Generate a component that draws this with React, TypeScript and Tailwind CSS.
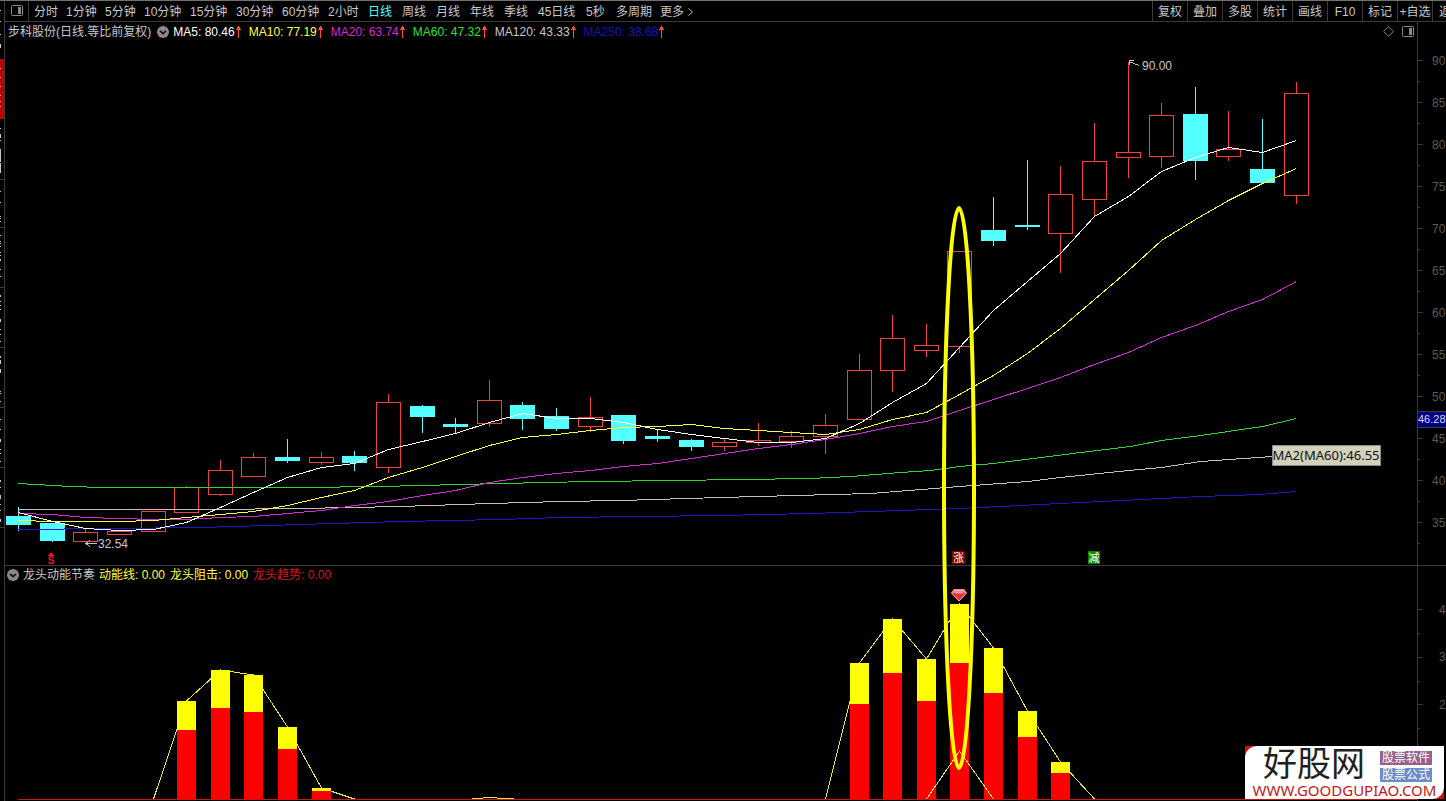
import React from "react";

type Candle = [x: number, wickTop: number, top: number, bottom: number, wickBottom: number, down?: 1];

const candles: Candle[] = [
  [18, 507, 516, 525, 531, 1],
  [52, 523, 523, 541, 542, 1],
  [85, 528, 532, 541, 541],
  [119, 531, 531, 534, 535],
  [153, 511, 511, 531, 531],
  [186, 486, 487, 512, 512],
  [220, 460, 470, 494, 496],
  [253, 453, 457, 476, 476],
  [287, 439, 457, 461, 463, 1],
  [321, 452, 457, 462, 465],
  [354, 451, 456, 463, 471, 1],
  [388, 394, 402, 467, 473],
  [422, 405, 406, 417, 433, 1],
  [455, 418, 424, 427, 434, 1],
  [489, 380, 400, 423, 427],
  [522, 402, 405, 419, 430, 1],
  [556, 408, 416, 429, 431, 1],
  [590, 397, 417, 426, 432],
  [623, 415, 415, 441, 444, 1],
  [657, 430, 436, 439, 442, 1],
  [691, 439, 440, 447, 451, 1],
  [724, 439, 442, 446, 451],
  [758, 423, 440, 442, 446],
  [791, 431, 436, 441, 448],
  [825, 414, 425, 436, 454],
  [859, 354, 370, 419, 419],
  [892, 315, 338, 370, 392],
  [926, 324, 345, 350, 357],
  [959, 251, 251, 346, 353],
  [993, 197, 230, 241, 246, 1],
  [1027, 160, 225, 227, 230, 1],
  [1060, 166, 194, 233, 273],
  [1094, 123, 161, 199, 217],
  [1128, 62, 152, 157, 178],
  [1161, 103, 115, 156, 168],
  [1195, 87, 114, 161, 180, 1],
  [1228, 111, 149, 156, 161],
  [1262, 119, 169, 183, 183, 1],
  [1296, 82, 93, 195, 204],
];

const averages = [
  {
    color: "#1818c8",
    points: "18,529 200,527 300,524 400,521 500,519 560,517 640,516 720,515 810,513 900,510 959,508 1060,503 1161,498 1200,496 1260,494 1296,491",
  },
  {
    color: "#c0c0c0",
    points: "18,509 210,509 300,508 400,506 490,503 560,501 620,500 720,497 870,493 959,486 1027,481 1060,477 1128,470 1161,467 1200,461 1272,456 1296,453",
  },
  {
    color: "#2fd62f",
    points: "18,483 70,486 103,487 300,487 380,486 500,483 590,481 674,480 740,479 810,478 850,476 900,472 930,470 959,466 993,463 1080,452 1130,446 1161,440 1200,435 1262,426 1296,418",
  },
  {
    color: "#d62ad6",
    points: "18,513 52,514 85,517 119,518 153,519 186,519 220,517 253,516 287,513 321,510 354,505 388,501 422,495 455,490 489,482 522,477 556,473 590,470 623,466 657,463 691,458 724,453 758,448 791,444 825,439 859,433 892,426 926,421 959,410 993,399 1027,388 1060,377 1094,364 1128,352 1161,337 1195,325 1228,311 1262,299 1296,281",
  },
  {
    color: "#ffff40",
    points: "18,520 52,521 85,521 119,521 153,520 186,517 220,514 253,511 287,505 321,497 354,490 388,477 422,467 455,456 489,445 522,437 556,434 590,430 623,427 657,426 691,424 724,428 758,430 791,432 825,434 859,429 892,419 926,412 959,394 993,375 1027,353 1060,328 1094,299 1128,270 1161,240 1195,219 1228,200 1262,183 1296,168",
  },
  {
    color: "#ffffff",
    points: "18,512 52,521 85,528 119,530 153,529 186,522 220,507 253,492 287,477 321,467 354,463 388,449 422,441 455,433 489,422 522,413 556,418 590,418 623,422 657,429 691,434 724,438 758,442 791,442 825,438 859,423 892,402 926,383 959,347 993,310 1027,281 1060,253 1094,216 1128,196 1161,171 1195,157 1228,147 1262,152 1296,140",
  },
];

const bars: [x: number, top: number, split: number][] = [
  [177, 701, 730],
  [211, 670, 708],
  [244, 675, 712],
  [278, 727, 749],
  [312, 788, 791],
  [850, 663, 704],
  [883, 619, 673],
  [917, 659, 701],
  [950, 604, 663],
  [984, 648, 693],
  [1018, 711, 737],
  [1051, 762, 773],
];

const prices = [90, 85, 80, 75, 70, 65, 60, 55, 50, 45, 40, 35];

const minutePeriods = [
  { label: "分时", width: "w-6" },
  { label: "1分钟", width: "w-[31px]" },
  { label: "5分钟", width: "w-[31px]" },
  { label: "10分钟", width: "w-[38px]" },
  { label: "15分钟", width: "w-[38px]" },
  { label: "30分钟", width: "w-[38px]" },
  { label: "60分钟", width: "w-[38px]" },
  { label: "2小时", width: "w-[31px]" },
];
const dayPeriods = [
  { label: "日线", width: "w-6", active: true },
  { label: "周线", width: "w-6" },
  { label: "月线", width: "w-6" },
  { label: "年线", width: "w-6" },
  { label: "季线", width: "w-6" },
  { label: "45日线", width: "w-[38px]" },
  { label: "5秒", width: "w-5" },
  { label: "多周期", width: "w-9" },
];
const tools = ["复权", "叠加", "多股", "统计", "画线", "F10", "标记", "+自选"];

const legend = [
  { text: "MA5: 80.46", cls: "text-white" },
  { text: "MA10: 77.19", cls: "text-[#ffff40]" },
  { text: "MA20: 63.74", cls: "text-[#d62ad6]" },
  { text: "MA60: 47.32", cls: "text-[#2fe02f]" },
  { text: "MA120: 43.33", cls: "text-[#c8c8c8]" },
  { text: "MA250: 38.68", cls: "text-[#1414c0]" },
];

const stripMarks: [y: number, h: number][] = [
  [10, 1], [21, 1], [34, 1], [44, 4], [68, 1], [77, 1], [86, 1], [95, 1], [101, 1], [106, 1], [128, 1], [134, 4], [140, 1],
  [149, 13], [163, 10], [191, 1], [202, 1], [216, 1], [218, 1], [221, 1], [235, 1], [241, 1], [243, 1], [246, 1], [252, 1],
  [255, 1], [259, 2], [269, 1], [276, 1], [295, 2], [301, 1], [305, 1], [309, 1], [319, 3], [329, 1], [334, 1], [341, 1],
  [356, 2], [360, 4], [369, 4], [391, 1], [393, 1], [401, 1], [419, 1], [429, 1], [439, 3], [449, 1], [453, 1], [461, 1],
  [480, 2], [487, 1], [495, 4], [504, 1], [510, 1], [519, 3],
];

function PanelIcon() {
  return (
    <svg className="size-3" viewBox="0 0 12 12" aria-hidden="true">
      <rect x="0.5" y="0.5" width="11" height="10" rx="1" fill="none" stroke="#8a8a8a" />
      <rect x="7" y="2" width="3" height="7" fill="#8a8a8a" />
    </svg>
  );
}

function CollapseIcon() {
  return (
    <svg className="size-3" viewBox="0 0 12 12" aria-hidden="true">
      <circle cx="6" cy="6" r="6" fill="#8a8a8a" />
      <path d="M3 4.8 6 7.6 9 4.8" fill="none" stroke="#101010" strokeWidth="1.6" />
    </svg>
  );
}

function UpArrow() {
  return (
    <svg className="h-3 w-[5px]" viewBox="0 0 5 12" shapeRendering="crispEdges" aria-label="上升">
      <path d="M2 0h1v1h1v2h1v1h-2v8h-1v-8h-2v-1h1v-2h1z" fill="#ff4848" />
    </svg>
  );
}

function Strip() {
  return (
    <aside className="w-[5px] shrink-0 overflow-hidden border-r border-[#3a3a3a]">
      <svg className="h-[800px] w-1" viewBox="0 1 4 800" shapeRendering="crispEdges" aria-hidden="true">
        <rect x="0" y="59" width="4" height="60" fill="#c00000" />
        {[179, 227, 287, 347, 407, 467, 527].map((y) => (
          <rect key={y} x="0" y={y} width="4" height="1" fill="#3a3a3a" />
        ))}
        {stripMarks.map(([y, h]) => (
          <rect key={y} x="0" y={y} width="1" height={h} fill="#c8c8c8" />
        ))}
      </svg>
    </aside>
  );
}

function PeriodButton({ label, width, active }: { label: string; width: string; active?: boolean }) {
  return (
    <button type="button" className={`${width} shrink-0 text-left ${active ? "text-[#54ffff]" : "text-[#c8c8c8]"}`}>
      {label}
    </button>
  );
}

function Toolbar() {
  return (
    <nav className="flex h-[21px] items-stretch overflow-hidden border-b border-[#3a3a3a] whitespace-nowrap">
      <button type="button" aria-label="面板" className="flex w-6 shrink-0 items-center justify-center border-r border-[#3a3a3a]">
        <PanelIcon />
      </button>
      <div className="flex items-center gap-2 pt-0.5 pl-[5px]">
        {minutePeriods.map((p) => (
          <PeriodButton key={p.label} {...p} />
        ))}
      </div>
      <div className="flex items-center gap-2.5 pt-0.5 pl-[9px]">
        {dayPeriods.map((p) => (
          <PeriodButton key={p.label} {...p} />
        ))}
      </div>
      <button type="button" className="flex items-center gap-1 pt-0.5 pl-2 text-[#c8c8c8]">
        更多
        <svg className="h-2 w-[5px]" viewBox="0 0 5 8" aria-hidden="true">
          <path d="M0.5 0.5 4.5 4 0.5 7.5" fill="none" stroke="#c0c0c0" />
        </svg>
      </button>
      <div className="ml-auto flex shrink-0">
        {tools.map((t) => (
          <button key={t} type="button" className="w-[35px] border-l border-[#3a3a3a] pt-0.5 text-center text-[#c8c8c8]">
            {t}
          </button>
        ))}
        <button type="button" className="w-[14px] overflow-hidden border-l border-[#3a3a3a] pt-0.5 pl-1.5 text-left text-[#c8c8c8]">
          返
        </button>
      </div>
    </nav>
  );
}

function PriceChart() {
  return (
    <svg className="block h-auto w-full" viewBox="5 40 1441 525" role="img" aria-label="日线K线图">
      <g shapeRendering="crispEdges">
        <rect x="1417" y="40" width="1" height="525" fill="#3a3a3a" />
        {prices.map((p, i) => (
          <g key={p} fill="#3a3a3a">
            <rect x="1418" y={60 + i * 42} width="5" height="1" />
            <rect x="1418" y={81 + i * 42} width="2" height="1" />
          </g>
        ))}
        {candles.map(([x, wt, t, b, wb, down]) =>
          down ? (
            <g key={x} fill="#54ffff">
              <rect x={x} y={wt} width="1" height={wb - wt} />
              <rect x={x - 12} y={t} width="25" height={b - t} />
            </g>
          ) : (
            <g key={x}>
              <rect x={x} y={wt} width="1" height={t - wt} fill="#f04040" />
              <rect x={x} y={b} width="1" height={wb - b} fill="#f04040" />
              <rect x={x - 11.5} y={t + 0.5} width="24" height={b - t} fill="none" stroke="#f04040" />
            </g>
          ),
        )}
        {averages.map((a) => (
          <polyline key={a.color} points={a.points} fill="none" stroke={a.color} transform="translate(0.5 0.5)" />
        ))}
        <path d="M97 543.5H86M90 540.5 85.5 543.5 90 546.5" fill="none" stroke="#c0c0c0" />
        <path d="M1139 65.5 1129 61.5M1134 60.5H1129.5V65" fill="none" stroke="#c0c0c0" />
        <rect x="952" y="551" width="13" height="13" fill="#7a0000" />
        <rect x="1088" y="551" width="12" height="13" fill="#008a00" />
        <path d="M50 553h2v1h1v1h1v1h-6v-1h1v-1h1z" fill="#f01414" />
        <rect x="1418" y="411" width="28" height="16" fill="#000080" />
        <rect x="1418" y="411" width="28" height="1" fill="#3a3a3a" />
        <rect x="1418" y="427" width="28" height="1" fill="#3a3a3a" />
        <rect x="1272.5" y="445.5" width="108" height="20" fill="#d2d2bc" stroke="#8a8a80" />
      </g>
      <g fontSize="12" fill="#c8c8c8">
        <text x="98" y="548">32.54</text>
        <text x="1142" y="70">90.00</text>
        <text x="1418" y="423" fontSize="11" fill="#d8d8ff">46.28</text>
        <text x="958.5" y="562" fontSize="11" textAnchor="middle" fill="#fff">涨</text>
        <text x="1094" y="562" fontSize="11" textAnchor="middle" fill="#fff">减</text>
        <text x="51" y="564" fontSize="10" fontWeight="bold" textAnchor="middle" fill="#f01414">S</text>
        {prices.map((p, i) => (
          <text key={p} x="1432" y={65 + i * 42} fill="#5a5a5a">{p}</text>
        ))}
      </g>
      <text x="1326" y="460" fontSize="13" textAnchor="middle" fill="#101010" fontFamily="'Noto Sans', sans-serif">
        MA2(MA60):46.55
      </text>
    </svg>
  );
}

function MomentumChart() {
  return (
    <svg className="block h-auto w-full" viewBox="5 583 1441 218" role="img" aria-label="龙头动能节奏">
      <g shapeRendering="crispEdges">
        <rect x="1417" y="583" width="1" height="218" fill="#3a3a3a" />
        {[609, 657, 704, 751].map((y) => (
          <g key={y} fill="#3a3a3a">
            <rect x="1418" y={y} width="5" height="1" />
            <rect x="1418" y={y + 24} width="2" height="1" />
          </g>
        ))}
        <rect x="18" y="799" width="1399" height="1" fill="#d81010" />
        <g fill="none" stroke="#e8e840">
          <polyline points="153.5,799 186.5,701 220.5,670 253.5,675 287.5,727 321.5,788 354.5,799" />
          <polyline points="472,799 488,797.5 514,799" />
          <polyline points="825.5,799 859.5,663 892.5,619 926.5,659 959.5,604 993.5,648 1027.5,711 1060.5,762 1094.5,799" />
        </g>
        {bars.map(([x, top, split]) => (
          <g key={x}>
            <rect x={x} y={top} width="19" height={split - top} fill="#ffff00" />
            <rect x={x} y={split} width="19" height={799 - split} fill="#ff0000" />
          </g>
        ))}
        <polyline points="926.5,799 959.5,751 993.5,799" fill="none" stroke="#e8e840" />
      </g>
      <path d="M954 589H964L967 593 959 601.5 951 593Z" fill="#e83040" />
      <path d="M954 589H964L967 593H951Z" fill="#f08a8a" />
      <path d="M954.5 590.5H963.5M951.5 593 959 601 966.5 593M955.5 593H962.5" fill="none" stroke="#ffb0b0" />
      <g fontSize="12" fill="#5a5a5a">
        <text x="1439" y="614">4</text>
        <text x="1439" y="661">3</text>
        <text x="1439" y="709">2</text>
      </g>
    </svg>
  );
}

function SiteBadge() {
  return (
    <a href="#home" className="absolute right-0.5 bottom-0.5 block bg-[#d01010]">
      <span className="flex h-[53px] w-[199px] flex-col rounded-tl-xl rounded-br-xl bg-white">
        <span className="flex h-[37px] items-center justify-between pr-3 pl-[18px]">
          <span className="text-[34px] leading-[37px] text-[#202020]">好股网</span>
          <span className="flex flex-col gap-[3px] pt-1 text-[12px] leading-[14px] text-white">
            <span className="bg-[#96608c] px-0.5">股票软件</span>
            <span className="bg-[#6a8cc8] px-0.5">股票公式</span>
          </span>
        </span>
        <span className="text-center font-['Noto_Sans',sans-serif] text-[15px] leading-[14px] text-[#c01818]">
          WWW.GOODGUPIAO.COM
        </span>
      </span>
    </a>
  );
}

export default function App() {
  return (
    <div className="relative flex min-h-screen overflow-hidden border-t border-[#707070] bg-black font-['Liberation_Sans','Noto_Sans_CJK_SC',sans-serif] text-[12px] leading-4 text-[#c8c8c8]">
      <Strip />
      <main className="min-w-0 flex-1">
        <Toolbar />
        <div className="relative">
          <section>
            <header className="flex h-[18px] overflow-hidden whitespace-nowrap">
              <div className="flex min-w-0 flex-1 items-center pt-px pl-[3px]">
                <h1>步科股份(日线.等比前复权)</h1>
                <button type="button" aria-label="折叠" className="mr-1 ml-1.5">
                  <CollapseIcon />
                </button>
                <div className="flex items-center gap-2">
                  {legend.map((l) => (
                    <span key={l.text} className="flex items-center gap-px">
                      <span className={l.cls}>{l.text}</span>
                      <UpArrow />
                    </span>
                  ))}
                </div>
                <div className="ml-auto flex items-center gap-2 pr-[3px]">
                  <svg className="size-[11px]" viewBox="0 0 11 11" aria-hidden="true">
                    <path d="M5.5 0.7 10.3 5.5 5.5 10.3 0.7 5.5Z" fill="none" stroke="#8a8a8a" />
                  </svg>
                  <PanelIcon />
                </div>
              </div>
              <div className="w-[29px] shrink-0 border-l border-[#3a3a3a]" />
            </header>
            <PriceChart />
          </section>
          <section className="border-t border-[#3a3a3a]">
            <header className="flex h-[17px] overflow-hidden whitespace-nowrap">
              <div className="flex min-w-0 flex-1 items-center gap-1 pl-0.5">
                <button type="button" aria-label="折叠">
                  <CollapseIcon />
                </button>
                <h2>龙头动能节奏</h2>
                <div className="flex gap-[5px]">
                  <span className="text-[#ffff40]">动能线: 0.00</span>
                  <span className="text-[#ffff40]">龙头阻击: 0.00</span>
                  <span className="text-[#d81818]">龙头趋势: 0.00</span>
                </div>
              </div>
              <div className="w-[29px] shrink-0 border-l border-[#3a3a3a]" />
            </header>
            <MomentumChart />
          </section>
          <svg className="pointer-events-none absolute inset-0 h-full w-full" viewBox="5 22 1441 779" aria-hidden="true">
            <ellipse cx="959" cy="488" rx="15" ry="280" fill="none" stroke="#ffff00" strokeWidth="4" />
          </svg>
        </div>
      </main>
      <SiteBadge />
    </div>
  );
}
